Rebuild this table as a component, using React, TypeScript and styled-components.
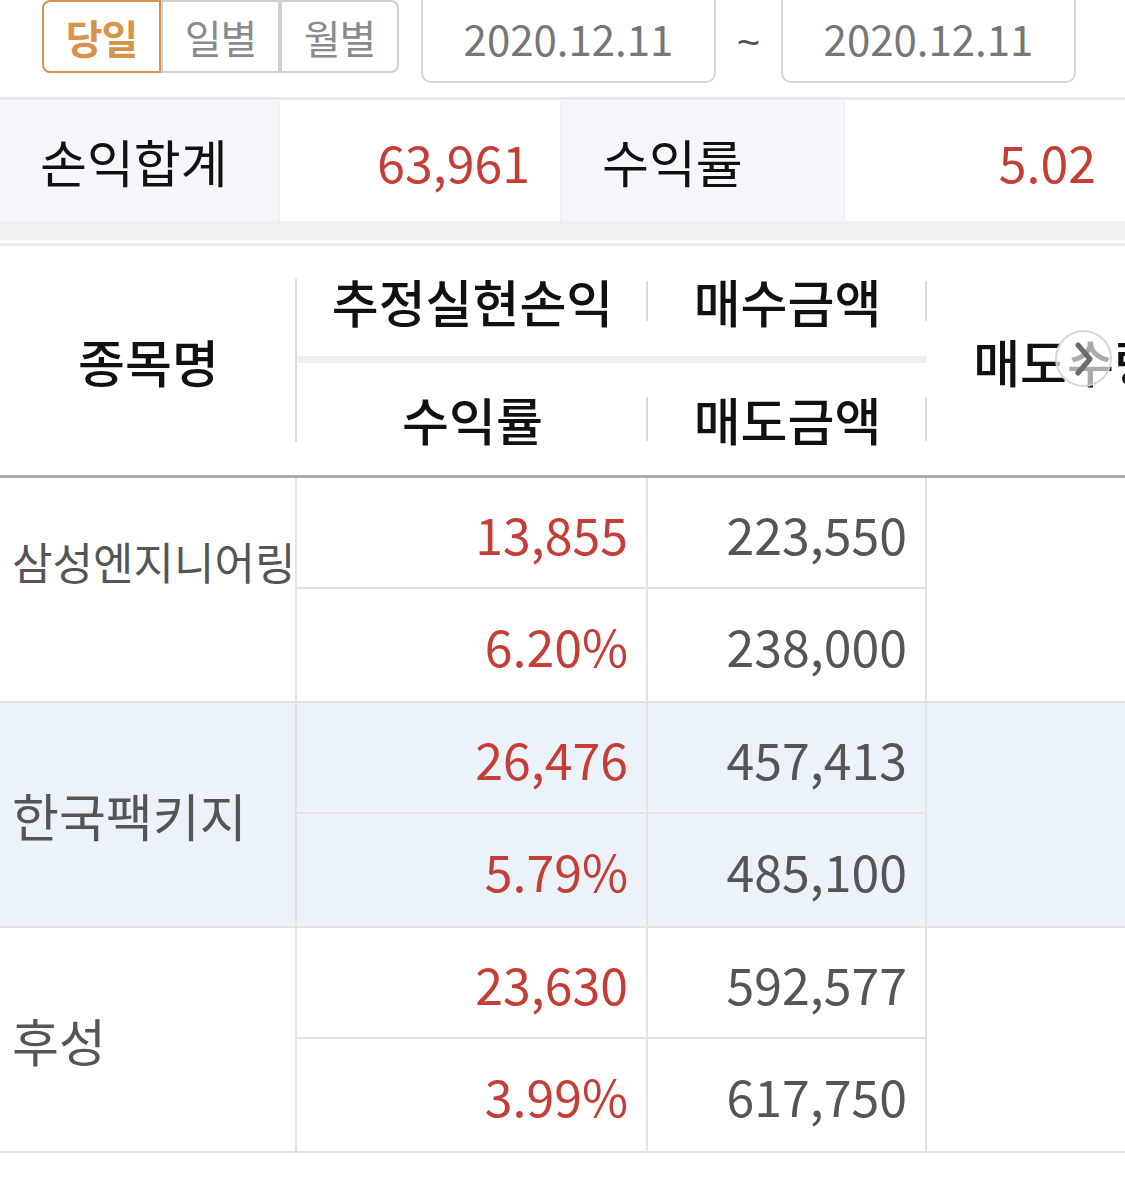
import React from 'react'
import styled, { createGlobalStyle } from 'styled-components'

const GlobalStyle = createGlobalStyle`
  html, body {
    margin: 0;
    padding: 0;
    background: #fff;
  }
  body {
    font-family: 'Noto Sans CJK KR', 'Noto Sans', sans-serif;
    color: #111;
  }
  * {
    box-sizing: border-box;
  }
`

const Page = styled.div`
  width: 1125px;
  height: 1194px;
  overflow: hidden;
  position: relative;
`

const TopBar = styled.div`
  display: flex;
  align-items: flex-start;
  height: 97px;
  padding-left: 42px;
`

const Segment = styled.div`
  display: flex;
  margin-right: 22px;
`

const SegButton = styled.div<{ $active?: boolean; $first?: boolean; $last?: boolean }>`
  width: 119px;
  height: 73px;
  display: flex;
  align-items: center;
  justify-content: center;
  border: 2px solid ${({ $active }) => ($active ? '#d8924a' : '#d0d0d0')};
  border-radius: ${({ $first, $last }) =>
    $first ? '8px 0 0 8px' : $last ? '0 8px 8px 0' : '0'};
  color: ${({ $active }) => ($active ? '#d8924a' : '#8a8a8a')};
  font-size: 40px;
  font-weight: ${({ $active }) => ($active ? 700 : 400)};
  letter-spacing: -1px;
`

const DateBox = styled.div`
  width: 295px;
  height: 95px;
  margin-top: -12px;
  padding-top: 4px;
  display: flex;
  align-items: center;
  justify-content: center;
  border: 2px solid #d6d6d6;
  border-radius: 10px;
  color: #777;
  font-size: 42px;
`

const Tilde = styled.div`
  width: 65px;
  text-align: center;
  color: #555;
  font-family: 'Liberation Sans', sans-serif;
  font-size: 40px;
  line-height: 84px;
`

const Divider = styled.div<{ $h: number; $color: string; $gap?: number }>`
  height: ${({ $h }) => $h}px;
  background: ${({ $color }) => $color};
  margin-top: ${({ $gap }) => $gap || 0}px;
`

const Summary = styled.div`
  display: grid;
  grid-template-columns: 278px 280px 281px 281px;
  column-gap: 2px;
  height: 120px;
  margin-top: 1px;
  background: #f0f1f4;
`

const SumCell = styled.div<{ $label?: boolean }>`
  display: flex;
  align-items: center;
  justify-content: ${({ $label }) => ($label ? 'flex-start' : 'flex-end')};
  padding: ${({ $label }) => ($label ? '0 0 0 40px' : '0 30px 0 0')};
  background: ${({ $label }) => ($label ? '#f5f7fb' : '#fff')};
  color: ${({ $label }) => ($label ? '#111' : '#c53d37')};
  font-size: ${({ $label }) => ($label ? '51px' : '50px')};
`

const Table = styled.div`
  position: relative;
`

const HeadGrid = styled.div`
  display: grid;
  grid-template-columns: 297px 351px 279px 280px;
  grid-template-rows: 110px 7px 112px;
  border-bottom: 3px solid #ababab;
`

const HeadCell = styled.div<{ $inset: number; $span?: boolean; $noLine?: boolean }>`
  position: relative;
  display: flex;
  align-items: center;
  justify-content: center;
  grid-row: ${({ $span }) => ($span ? '1 / 4' : 'auto')};
  font-size: 51px;
  font-weight: 500;
  color: #111;
  white-space: nowrap;

  &::after {
    content: '';
    display: ${({ $noLine }) => ($noLine ? 'none' : 'block')};
    position: absolute;
    right: 0;
    top: ${({ $inset }) => $inset}px;
    bottom: ${({ $inset }) => $inset}px;
    width: 2px;
    background: #dadada;
  }
`

const HeadBand = styled.div`
  grid-column: 2 / 4;
  background: #efefef;
`

const Group = styled.div<{ $tint?: boolean }>`
  display: grid;
  grid-template-columns: 297px 351px 279px 280px;
  grid-template-rows: 111px 112px;
  border-bottom: 2px solid #e3e3e3;
  background: ${({ $tint }) => ($tint ? '#ebf2f9' : '#fff')};
`

const NameCell = styled.div<{ $compact?: boolean }>`
  grid-row: 1 / 3;
  display: flex;
  align-items: center;
  padding: ${({ $compact }) => ($compact ? '0 0 58px 12px' : '0 0 0 12px')};
  border-right: 2px solid #e3e3e3;
  color: #555;
  font-size: ${({ $compact }) => ($compact ? '44px' : '51px')};
  white-space: nowrap;
`

const ValueCell = styled.div<{ $red?: boolean; $top?: boolean }>`
  display: flex;
  align-items: center;
  justify-content: flex-end;
  padding-right: 18px;
  border-right: 2px solid #e3e3e3;
  border-bottom: ${({ $top }) => ($top ? '2px solid #e3e3e3' : 'none')};
  color: ${({ $red }) => ($red ? '#c53d37' : '#555')};
  font-size: 50px;
`

const EmptyCell = styled.div`
  grid-column: 4;
  grid-row: 1 / 3;
`

const ScrollHint = styled.div`
  position: absolute;
  left: 1055px;
  top: 84px;
  width: 57px;
  height: 57px;
  border-radius: 50%;
  border: 2px solid rgba(205, 205, 205, 0.8);
  background: rgba(255, 255, 255, 0.65);
  display: flex;
  align-items: center;
  justify-content: center;
`

const rows = [
  { name: '삼성엔지니어링', pl: '13,855', rate: '6.20%', buy: '223,550', sell: '238,000', compact: true },
  { name: '한국팩키지', pl: '26,476', rate: '5.79%', buy: '457,413', sell: '485,100', tint: true },
  { name: '후성', pl: '23,630', rate: '3.99%', buy: '592,577', sell: '617,750' },
]

export default function App() {
  return (
    <Page>
      <GlobalStyle />
      <TopBar>
        <Segment>
          <SegButton $active $first>당일</SegButton>
          <SegButton>일별</SegButton>
          <SegButton $last>월별</SegButton>
        </Segment>
        <DateBox>2020.12.11</DateBox>
        <Tilde>~</Tilde>
        <DateBox>2020.12.11</DateBox>
      </TopBar>
      <Divider $h={3} $color="#e7e9ed" />

      <Summary>
        <SumCell $label>손익합계</SumCell>
        <SumCell>63,961</SumCell>
        <SumCell $label>수익률</SumCell>
        <SumCell>5.02</SumCell>
      </Summary>
      <Divider $h={19} $color="#f0f0f2" />
      <Divider $h={3} $color="#ececec" $gap={3} />

      <Table>
        <HeadGrid>
          <HeadCell $span $inset={33}>종목명</HeadCell>
          <HeadCell $inset={35}>추정실현손익</HeadCell>
          <HeadCell $inset={35}>매수금액</HeadCell>
          <HeadCell $span $noLine $inset={0} style={{ gridColumn: 4 }}>
            매도수량
          </HeadCell>
          <HeadBand />
          <HeadCell $inset={34} style={{ gridColumn: 2 }}>수익률</HeadCell>
          <HeadCell $inset={34}>매도금액</HeadCell>
        </HeadGrid>

        {rows.map(r => (
          <Group key={r.name} $tint={r.tint}>
            <NameCell $compact={r.compact}>{r.name}</NameCell>
            <ValueCell $red $top>{r.pl}</ValueCell>
            <ValueCell $top>{r.buy}</ValueCell>
            <EmptyCell />
            <ValueCell $red style={{ gridColumn: 2 }}>{r.rate}</ValueCell>
            <ValueCell>{r.sell}</ValueCell>
          </Group>
        ))}

        <ScrollHint>
          <svg width="22" height="34" viewBox="0 0 22 34">
            <path d="M5 3 L17 17 L5 31" fill="none" stroke="#6b6b6b" strokeWidth="5" strokeLinecap="round" strokeLinejoin="round" />
          </svg>
        </ScrollHint>
      </Table>
    </Page>
  )
}
